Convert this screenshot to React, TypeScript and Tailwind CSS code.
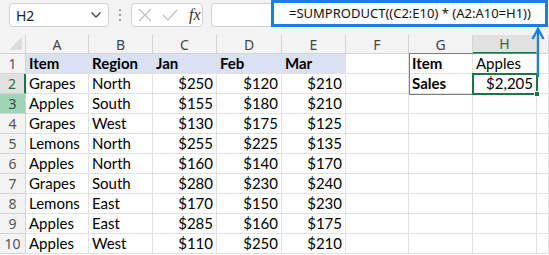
import React from 'react';

const COLS = ['A', 'B', 'C', 'D', 'E', 'F', 'G', 'H', ''];

const DATA: string[][] = [
  ['Item', 'Region', 'Jan', 'Feb', 'Mar'],
  ['Grapes', 'North', '$250', '$120', '$210'],
  ['Apples', 'South', '$155', '$180', '$210'],
  ['Grapes', 'West', '$130', '$175', '$125'],
  ['Lemons', 'North', '$255', '$225', '$135'],
  ['Apples', 'North', '$160', '$140', '$170'],
  ['Grapes', 'South', '$280', '$230', '$240'],
  ['Lemons', 'East', '$170', '$150', '$230'],
  ['Apples', 'East', '$285', '$160', '$175'],
  ['Apples', 'West', '$110', '$250', '$210'],
];

const cellFont = { fontFamily: 'Lato, "Liberation Sans", sans-serif' };
const uiFont = { fontFamily: '"Noto Sans", sans-serif' };

const FormulaBar = () => (
  <div className="relative flex h-[35px] items-start pt-[3px] bg-[#f3f3f3]">
    {/* Name box */}
    <div className="ml-[9px] flex h-[24px] w-[100px] items-center justify-between rounded-[4px] border border-[#d1d1d1] bg-white pl-[6px] pr-[6px]">
      <span className="text-[14px] text-[#222]" style={uiFont}>
        H2
      </span>
      <svg width="12" height="8" viewBox="0 0 12 8">
        <path d="M1.5 1.5 L6 6 L10.5 1.5" fill="none" stroke="#444" strokeWidth="1.3" />
      </svg>
    </div>
    {/* Dots */}
    <div className="ml-[9px] mt-[6px] flex w-[4px] flex-col items-center gap-[3px]">
      <span className="h-[2px] w-[2px] rounded-full bg-[#8a8a8a]" />
      <span className="h-[2px] w-[2px] rounded-full bg-[#8a8a8a]" />
      <span className="h-[2px] w-[2px] rounded-full bg-[#8a8a8a]" />
    </div>
    {/* Cancel / enter / fx */}
    <div className="ml-[9px] flex h-[24px] w-[72px] items-center rounded-[4px] border border-[#d1d1d1] bg-white pl-[6px]">
      <svg width="14" height="14" viewBox="0 0 14 14">
        <path d="M1 1 L13 13 M13 1 L1 13" stroke="#bdbdbd" strokeWidth="1.2" />
      </svg>
      <svg className="ml-[10px]" width="16" height="14" viewBox="0 0 16 14">
        <path d="M1 7 L6 12 L15 2" fill="none" stroke="#bdbdbd" strokeWidth="1.2" />
      </svg>
      <span
        className="ml-[11px] text-[16px] italic text-[#333]"
        style={{ fontFamily: '"Liberation Serif", serif' }}
      >
        fx
      </span>
    </div>
    {/* Formula input */}
    <div className="ml-[8px] h-[24px] flex-1 rounded-l-[4px] border border-r-0 border-[#d1d1d1] bg-white" />
    {/* Highlighted formula */}
    <div className="absolute left-[271px] top-0 flex h-[27px] w-[277px] items-center overflow-hidden border-[3px] border-[#1a7fe0] bg-white pl-[15px]">
      <span className="whitespace-nowrap text-[13px] leading-none text-[#111]" style={uiFont}>
        =SUMPRODUCT((C2:E10) * (A2:A10=H1))
      </span>
    </div>
  </div>
);

const Sheet = () => {
  const rows = Array.from({ length: 10 }, (_, r) => {
    const base = DATA[r] ?? [];
    const extra = ['', '', ''];
    if (r === 0) {
      extra[1] = 'Item';
      extra[2] = 'Apples';
    }
    if (r === 1) {
      extra[1] = 'Sales';
      extra[2] = '$2,205';
    }
    return [...base, extra[0], extra[1], extra[2], ''];
  });

  return (
    <div className="relative">
      <div className="grid grid-cols-[26px_63px_64px_64px_65px_64px_63px_64px_64px_12px] grid-rows-[19px_repeat(10,20px)]">
        {/* Corner */}
        <div className="relative border-b border-r border-[#d4d4d4] bg-[#f3f3f3]">
          <svg className="absolute bottom-[3px] right-[3px]" width="13" height="13" viewBox="0 0 13 13">
            <path d="M13 0 L13 13 L0 13 Z" fill="#dcdcdc" />
          </svg>
        </div>
        {COLS.map((c, i) => (
          <div
            key={c + i}
            className={`flex items-center justify-center border-r text-[14px] ${
              c === 'H'
                ? 'border-b-[2px] border-b-[#217346] border-r-[#d4d4d4] bg-[#e1e1e1] text-[#217346]'
                : 'border-b border-[#d4d4d4] bg-[#f3f3f3] text-[#444]'
            }`}
            style={uiFont}
          >
            {c}
          </div>
        ))}
        {rows.map((row, r) => (
          <React.Fragment key={r}>
            <div
              className={`flex items-center justify-center border-b text-[14px] ${
                r === 1
                  ? 'border-r-[2px] border-r-[#217346] border-b-[#d4d4d4] bg-[#e1e1e1] text-[#217346]'
                  : r === 2
                  ? 'border-r border-[#d4d4d4] bg-[#9fd5b7] text-[#444]'
                  : 'border-r border-[#d4d4d4] bg-[#f3f3f3] text-[#555]'
              }`}
              style={uiFont}
            >
              {r + 1}
            </div>
            {row.map((v, ci) => {
              const isMoney = v.startsWith('$');
              const bold = (r === 0 && ci < 5) || (ci === 6 && r < 2);
              const blue = r === 0 && ci < 5;
              return (
                <div
                  key={ci}
                  className={`flex items-center overflow-hidden whitespace-nowrap border-b border-r border-[#e1e1e1] px-[3px] text-[15px] text-black ${
                    isMoney && r !== 0 ? 'justify-end' : 'justify-start'
                  } ${bold ? 'font-bold' : ''} ${blue ? 'bg-[#d9e1f2]' : 'bg-white'}`}
                  style={cellFont}
                >
                  {v}
                </div>
              );
            })}
          </React.Fragment>
        ))}
      </div>
      {/* G1:H2 outline */}
      <div className="pointer-events-none absolute left-[409px] top-[18px] h-[42px] w-[129px] border border-[#7f7f7f]" />
      {/* H2 active cell */}
      <div className="pointer-events-none absolute left-[472px] top-[38px] h-[22px] w-[66px] border-[2px] border-[#217346]">
        <div className="absolute -bottom-[4px] -right-[4px] h-[6px] w-[6px] border border-white bg-[#217346]" />
      </div>
    </div>
  );
};

export default function App() {
  return (
    <div className="relative h-[255px] w-[549px] overflow-hidden bg-white">
      <FormulaBar />
      <Sheet />
      {/* Blue arrow annotation */}
      <svg className="pointer-events-none absolute left-[530px] top-[27px]" width="16" height="52" viewBox="0 0 16 52">
        <path d="M8 2 L8 50" stroke="#1a7fe0" strokeWidth="2.2" />
        <path d="M2.5 12 L8 2 L13.5 12" fill="none" stroke="#1a7fe0" strokeWidth="2.4" strokeLinejoin="miter" />
      </svg>
    </div>
  );
}
